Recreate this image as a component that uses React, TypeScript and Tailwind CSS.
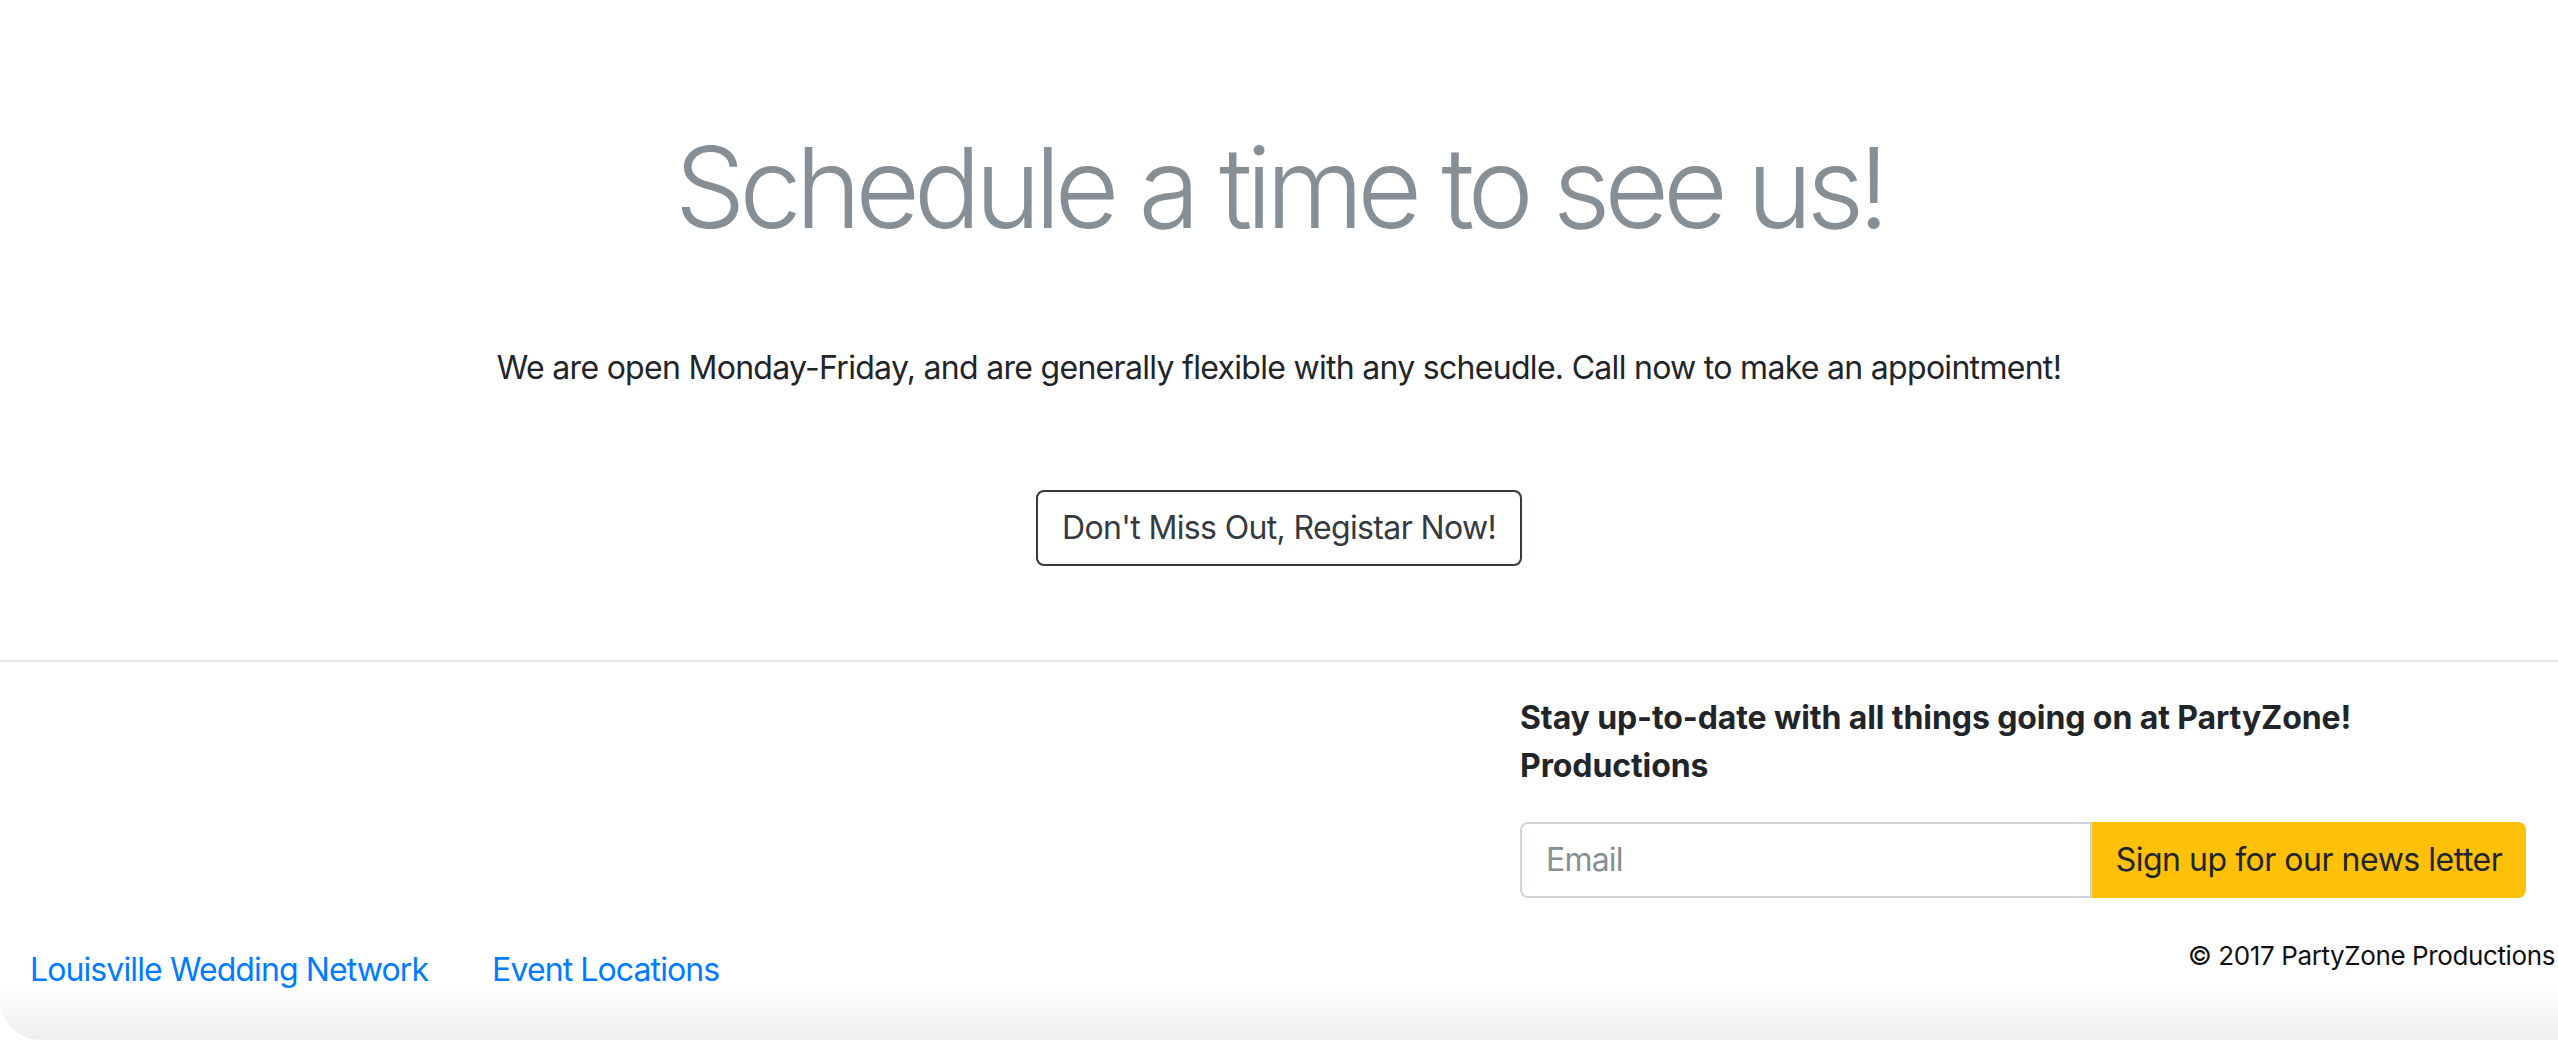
export default function App() {
  return (
    <div className="relative w-[2558px] h-[1040px] overflow-hidden bg-white font-['Inter','Liberation_Sans',sans-serif] text-[#212529]">
      <section className="flex flex-col items-center pt-[120px]">
        <h1 className="text-[112px] leading-[1.2] font-light tracking-[-0.056em] text-[#868e96]">
          Schedule a time to see us!
        </h1>
        <p className="mt-[90px] text-[32px] leading-[48px] tracking-[-0.022em]">
          We are open Monday-Friday, and are generally flexible with any scheudle. Call now to make an appointment!
        </p>
        <button className="mt-[98px] h-[76px] px-[24px] rounded-[8px] border-2 border-[#343a40] text-[32px] leading-[48px] tracking-[-0.02em] text-[#343a40] bg-white">
          Don't Miss Out, Registar Now!
        </button>
      </section>

      <div className="mt-[94px] h-[2px] bg-[#e6e6e6]" />

      <footer className="flex">
        <div className="flex-1 flex gap-[64px] pt-[284px] pl-[30px] text-[32px] leading-[48px] tracking-[-0.028em] text-[#007bff]">
          <a href="#">Louisville Wedding Network</a>
          <a href="#">Event Locations</a>
        </div>
        <div className="w-[1038px] pt-[32px]">
          <h5 className="w-[1006px] text-[32px] leading-[48px] font-bold tracking-[-0.003em] text-[#212529]">
            Stay up-to-date with all things going on at PartyZone! Productions
          </h5>
          <div className="mt-[32px] flex w-[1006px] h-[76px]">
            <input
              placeholder="Email"
              className="flex-1 min-w-0 rounded-l-[8px] border-2 border-[#ced4da] px-[24px] text-[32px] tracking-tight text-[#495057] placeholder:text-[#868e96] outline-none"
            />
            <button className="w-[434px] rounded-r-[8px] bg-[#ffc107] text-[32px] tracking-[-0.015em] text-[#212529]">
              Sign up for our news letter
            </button>
          </div>
          <p className="mt-[38px] pr-[3px] text-right text-[26px] leading-[39px] tracking-[-0.015em] text-[#111]">
            © 2017 PartyZone Productions
          </p>
        </div>
      </footer>

      <div className="pointer-events-none absolute bottom-0 left-0 right-0 h-[55px] rounded-bl-[40px] bg-linear-to-b from-white/0 to-[#eeeeee]" />
    </div>
  );
}
